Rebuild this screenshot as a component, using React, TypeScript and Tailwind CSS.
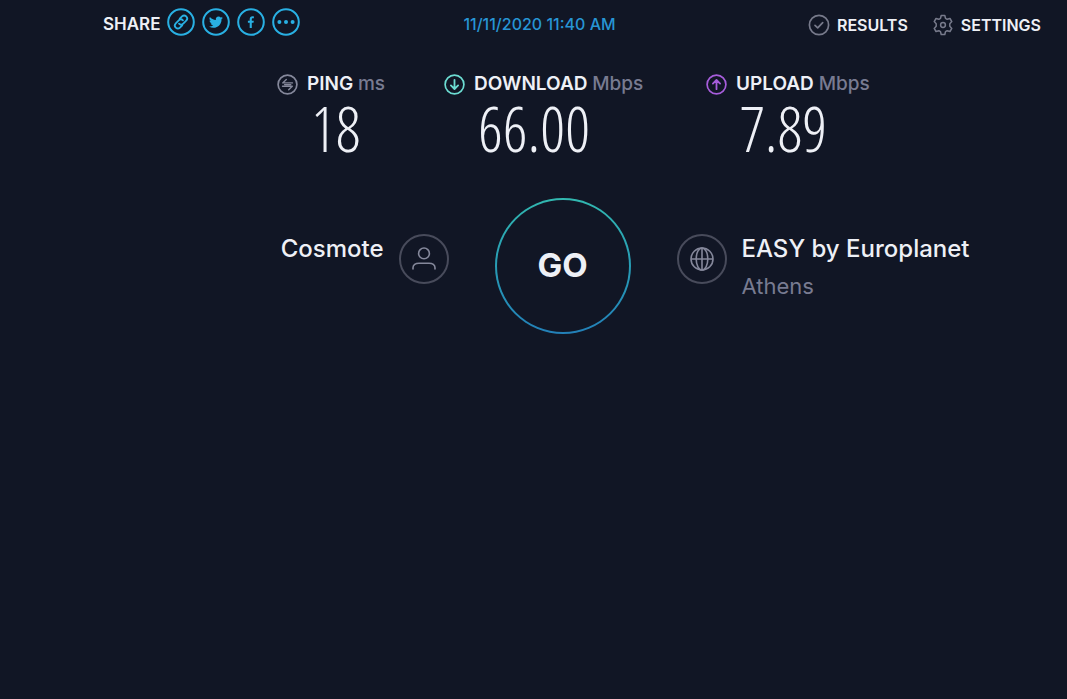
import type { ReactNode } from "react";

const shareLinks = [
  {
    label: "Copy link",
    icon: (
      <g transform="rotate(-45 14 14)" fill="none" stroke="currentColor" strokeWidth="1.8" strokeLinecap="round">
        <path d="M12.6 17.2H9.4a3 3 0 0 1 0-6h4.2a3 3 0 0 1 3 3" />
        <path d="M15.4 10.8h3.2a3 3 0 0 1 0 6h-4.200a3 3 0 0 1-3-3" />
      </g>
    ),
  },
  {
    label: "Share on Twitter",
    icon: (
      <path
        transform="translate(7 7.2) scale(0.58)"
        fill="currentColor"
        d="M23.95 4.57a10 10 0 0 1-2.82.77 4.96 4.96 0 0 0 2.16-2.72c-.95.55-2 .95-3.13 1.18a4.92 4.92 0 0 0-8.38 4.48C7.69 8.1 4.07 6.13 1.64 3.16a4.92 4.92 0 0 0 1.52 6.57 4.9 4.9 0 0 1-2.23-.61v.06c0 2.38 1.7 4.37 3.95 4.82a5 5 0 0 1-2.21.09 4.94 4.94 0 0 0 4.6 3.42A9.87 9.87 0 0 1 0 19.54a13.99 13.99 0 0 0 7.56 2.21c9.05 0 14-7.5 14-13.98 0-.21 0-.42-.02-.63a9.94 9.94 0 0 0 2.46-2.55z"
      />
    ),
  },
  {
    label: "Share on Facebook",
    icon: (
      <path
        fill="currentColor"
        d="M12.7 20v-5.2h-1.8v-2.1h1.8v-1.5c0-1.9 1.1-2.9 2.8-2.9.7 0 1.2.1 1.4.1v1.9h-1c-.9 0-1.1.5-1.1 1.1v1.3h2l-.3 2.1h-1.7V20z"
      />
    ),
  },
  {
    label: "More",
    icon: (
      <g fill="currentColor">
        <circle cx="7.4" cy="14" r="2" />
        <circle cx="14" cy="14" r="2" />
        <circle cx="20.6" cy="14" r="2" />
      </g>
    ),
  },
];

const metrics = [
  {
    label: "PING",
    unit: "ms",
    value: "18",
    color: "text-[#85889b]",
    icon: <path d="M15.5 8.9H5.7l3.6-3.4M7.6 10.6h6.2M5.5 12.3h9.8l-3.6 3.4" />,
  },
  {
    label: "DOWNLOAD",
    unit: "Mbps",
    value: "66.00",
    color: "text-[#6cdcd2]",
    icon: <path strokeWidth="1.8" d="M10.5 5.8v9M6.9 11.4l3.6 3.6 3.6-3.6" />,
  },
  {
    label: "UPLOAD",
    unit: "Mbps",
    value: "7.89",
    color: "text-[#a75ddb]",
    icon: <path strokeWidth="1.8" d="M10.5 15.2v-9M6.9 9.6l3.6-3.6 3.6 3.6" />,
  },
];

const RoundIcon = ({ children }: { children: ReactNode }) => (
  <span className="flex size-[50px] shrink-0 items-center justify-center rounded-full border-2 border-[#484b5b] text-[#85889b]">
    {children}
  </span>
);

const Header = () => (
  <header className="grid grid-cols-[1fr_auto_1fr] items-start pt-2 pl-3">
    <div className="flex items-center gap-[7px] pl-[91px]">
      <span className="pt-[3px] text-[17px] leading-6 font-semibold">SHARE</span>
      <div className="flex gap-[7px]">
        {shareLinks.map((link) => (
          <a key={link.label} href="#" aria-label={link.label} className="text-[#29b0e3]">
            <svg className="size-7" viewBox="0 0 28 28">
              <circle cx="14" cy="14" r="12.8" fill="none" stroke="currentColor" strokeWidth="2" />
              {link.icon}
            </svg>
          </a>
        ))}
      </div>
    </div>

    <time className="pt-1 text-base font-medium text-[#2795d4]">11/11/2020 11:40 AM</time>

    <nav className="flex justify-end gap-6 pt-[5px] pr-[26px] text-base font-semibold">
      <a href="#" className="flex items-center gap-[7px]">
        <svg
          className="size-[22px] text-[#777a8b]"
          viewBox="0 0 22 22"
          fill="none"
          stroke="currentColor"
          strokeWidth="1.7"
          strokeLinecap="round"
          strokeLinejoin="round"
        >
          <circle cx="11" cy="11" r="9.6" />
          <path d="M7 11.4l2.7 2.5 5-5.3" />
        </svg>
        RESULTS
      </a>
      <a href="#" className="flex items-center gap-[7px]">
        <svg
          className="size-[22px] text-[#777a8b]"
          viewBox="0 0 22 22"
          fill="none"
          stroke="currentColor"
          strokeWidth="1.5"
          strokeLinejoin="round"
        >
          <path d="M9.2 1.5h3.6l.7 2.8 1.7 1 2.8-.8 1.8 3.1-2 2.1v2.6l2 2.1-1.8 3.1-2.8-.8-1.7 1-.7 2.8H9.2l-.7-2.8-1.7-1-2.8.8-1.8-3.1 2-2.1V9.7l-2-2.1L4 4.5l2.8.8 1.7-1z" />
          <circle cx="11" cy="11" r="2.4" />
        </svg>
        SETTINGS
      </a>
    </nav>
  </header>
);

const Results = () => (
  <section className="mt-[33px] grid grid-cols-[167px_262px_167px] justify-center pl-[83px]">
    {metrics.map((metric) => (
      <div key={metric.label}>
        <div className="flex items-center gap-[9px] whitespace-nowrap">
          <svg
            className={`size-[21px] ${metric.color}`}
            viewBox="0 0 21 21"
            fill="none"
            stroke="currentColor"
            strokeWidth="1.4"
            strokeLinecap="round"
            strokeLinejoin="round"
          >
            <circle cx="10.5" cy="10.5" r="9.4" strokeWidth="1.7" />
            {metric.icon}
          </svg>
          <h2 className="text-[19px] leading-7 font-semibold">
            {metric.label} <span className="font-medium text-[#787b91]">{metric.unit}</span>
          </h2>
        </div>
        <p className="pl-[34px] font-['Open_Sans_Condensed_Light','Noto_Sans_ExtraCondensed_Light','Roboto_Condensed_Light','Liberation_Sans_Narrow',sans-serif] text-[62px] leading-[60px] font-light">
          {metric.value}
        </p>
      </div>
    ))}
  </section>
);

const Connection = () => (
  <section className="mt-10 grid grid-cols-[1fr_auto_1fr] gap-[46px] pl-[58px]">
    <div className="flex justify-end gap-[15px] pt-9">
      <span className="text-2xl leading-[30px] font-medium">Cosmote</span>
      <RoundIcon>
        <svg className="size-6" viewBox="0 0 24 24" fill="none" stroke="currentColor" strokeWidth="1.6">
          <circle cx="12" cy="6.4" r="5.4" />
          <path strokeLinecap="round" d="M1 22v-1.2c0-2.7 2.5-4.6 6-4.6h10c3.5 0 6 1.9 6 4.6V22" />
        </svg>
      </RoundIcon>
    </div>

    <button className="size-[136px] rounded-full bg-linear-to-b from-[#32b8b0] to-[#2380b8] p-[2px]">
      <span className="flex size-full items-center justify-center rounded-full bg-[#111625] text-[33px] font-bold">
        GO
      </span>
    </button>

    <div className="flex gap-[15px] pt-9">
      <RoundIcon>
        <svg className="size-6" viewBox="0 0 24 24" fill="none" stroke="currentColor" strokeWidth="1.6">
          <circle cx="12" cy="12" r="11" />
          <ellipse cx="12" cy="12" rx="5.8" ry="11" />
          <path d="M12 1v22M1 12h22" />
        </svg>
      </RoundIcon>
      <div>
        <p className="text-2xl leading-[30px] font-medium">EASY by Europlanet</p>
        <p className="pt-2 text-[22px] leading-7 text-[#787b91]">Athens</p>
      </div>
    </div>
  </section>
);

const App = () => {
  return (
    <div className="min-h-screen bg-[#111625] font-['Inter',sans-serif] text-[#eef0f6]">
      <Header />
      <main>
        <Results />
        <Connection />
      </main>
    </div>
  );
};

export default App;
